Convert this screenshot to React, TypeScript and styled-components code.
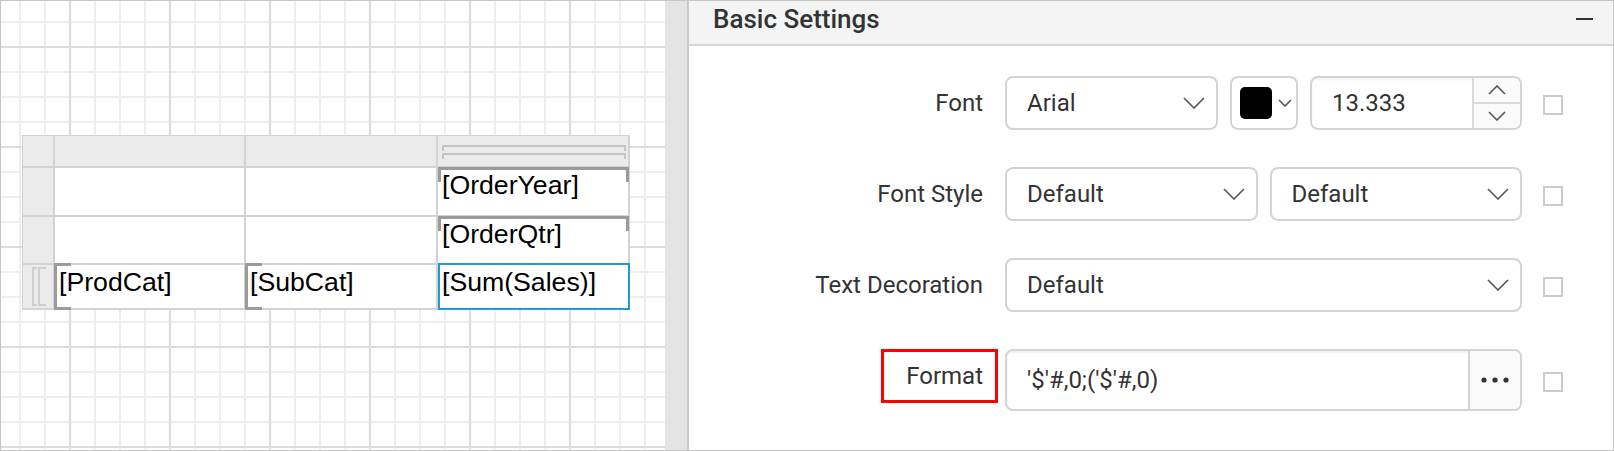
import React from 'react';
import styled, { createGlobalStyle, css } from 'styled-components';

const GlobalStyle = createGlobalStyle`
  * {
    box-sizing: border-box;
  }
  body {
    margin: 0;
    background: #fff;
    font-family: Roboto, 'Liberation Sans', sans-serif;
  }
`;

const Frame = styled.div`
  display: flex;
  width: 1614px;
  height: 451px;
  border: 1px solid #c6c6c6;
  overflow: hidden;
`;

// design surface with the 25px / 100px grid
const Canvas = styled.div`
  flex: 0 0 664px;
  padding: 134px 0 0 21px;
  background-color: #fff;
  background-image:
    linear-gradient(to right, #dcdcdc 2px, transparent 2px),
    linear-gradient(to bottom, #dcdcdc 2px, transparent 2px),
    linear-gradient(to right, #eeeeee 2px, transparent 2px),
    linear-gradient(to bottom, #eeeeee 2px, transparent 2px);
  background-size: 100px 100px, 100px 100px, 25px 25px, 25px 25px;
  background-position: 68px 45px, 68px 45px, 18px 20px, 18px 20px;
`;

const Splitter = styled.div`
  flex: 0 0 24px;
  background: #e4e4e4;
  border-right: 2px solid #c9c9c9;
`;

const Panel = styled.div`
  flex: 1;
  display: flex;
  flex-direction: column;
  background: #fff;
`;

const PanelHeader = styled.div`
  height: 45px;
  display: flex;
  align-items: center;
  justify-content: space-between;
  padding: 0 20px 7px 24px;
  background: #f4f4f4;
  border-bottom: 2px solid #d6d6d6;
`;

const PanelTitle = styled.span`
  font-size: 26px;
  font-weight: 500;
  color: #333;
`;

const Collapse = styled.span`
  width: 17px;
  height: 2px;
  background: #333;
`;

const SettingsGrid = styled.div`
  display: grid;
  grid-template-columns: 1fr 517px 34px;
  column-gap: 7px;
  row-gap: 37px;
  align-items: start;
  padding: 30px 50px 0 0;
`;

const FieldLabel = styled.div<{ $highlight?: boolean }>`
  justify-self: end;
  height: 54px;
  display: flex;
  align-items: center;
  padding: 0 12px 0 22px;
  border: 3px solid ${p => (p.$highlight ? '#ff0000' : 'transparent')};
  font-size: 24px;
  color: #333;
  white-space: nowrap;
`;

const ControlRow = styled.div`
  display: flex;
  gap: 12px;
`;

const Select = styled.div<{ $width?: number }>`
  flex: ${p => (p.$width ? `0 0 ${p.$width}px` : '1 1 0')};
  height: 54px;
  display: flex;
  align-items: center;
  justify-content: space-between;
  padding: 0 11px 0 20px;
  border: 2px solid #d3d3d3;
  border-radius: 8px;
  font-size: 24px;
  color: #333;
`;

const ColorPicker = styled.div`
  flex: 0 0 68px;
  height: 54px;
  display: flex;
  align-items: center;
  gap: 6px;
  padding-left: 8px;
  border: 2px solid #d3d3d3;
  border-radius: 8px;
`;

const Swatch = styled.span<{ $color: string }>`
  width: 32px;
  height: 32px;
  border-radius: 5px;
  background: ${p => p.$color};
`;

const Numeric = styled.div`
  flex: 1;
  height: 54px;
  display: flex;
  border: 2px solid #d3d3d3;
  border-radius: 8px;
  overflow: hidden;
  box-shadow: inset 0 2px 2px rgba(0, 0, 0, 0.05);
`;

const FieldValue = styled.div`
  flex: 1;
  display: flex;
  align-items: center;
  padding-left: 20px;
  font-size: 24px;
  color: #333;
  white-space: nowrap;
`;

const Spinner = styled.div`
  flex: 0 0 48px;
  display: flex;
  flex-direction: column;
  border-left: 2px solid #d8d8d8;
  background: #fafafa;
`;

const SpinButton = styled.div<{ $top?: boolean }>`
  flex: 1;
  display: flex;
  align-items: center;
  justify-content: center;
  ${p => p.$top && css`border-bottom: 2px solid #d8d8d8;`}
`;

const TextBox = styled.div`
  height: 62px;
  display: flex;
  border: 2px solid #d3d3d3;
  border-radius: 8px;
  overflow: hidden;
  box-shadow: inset 0 2px 2px rgba(0, 0, 0, 0.05);
`;

const EllipsisButton = styled.div`
  flex: 0 0 52px;
  display: flex;
  align-items: center;
  justify-content: center;
  border-left: 2px solid #d3d3d3;
  background: #fafafa;
`;

const Check = styled.div`
  justify-self: end;
  align-self: center;
  margin-top: 4px;
  width: 20px;
  height: 20px;
  border: 2px solid #cbcbcb;
  background: #fff;
`;

// report tablix on the design surface
const DesignTable = styled.div`
  display: grid;
  grid-template-columns: 30px 189px 190px 190px;
  grid-template-rows: 30px 47px 46px 43px;
  gap: 2px;
  padding: 1px 2px 2px 1px;
  width: max-content;
  background: #d3d3d3;
`;

const HeadCell = styled.div`
  background: #ebebeb;
`;

const Cell = styled.div<{ $mark?: 'left' | 'top'; $selected?: boolean }>`
  position: relative;
  background: #fff;
  padding: 2px 4px;
  font-family: 'Liberation Sans', Arial, sans-serif;
  font-size: 26.67px;
  color: #000;
  white-space: nowrap;
  ${p => p.$mark === 'left' && css`
    &::before {
      content: '';
      position: absolute;
      top: -2px;
      bottom: -2px;
      left: -1px;
      width: 14px;
      border: 3px solid #9b9b9b;
      border-right: none;
    }
  `}
  ${p => p.$mark === 'top' && css`
    &::before {
      content: '';
      position: absolute;
      top: -1px;
      left: 0;
      right: -1px;
      height: 12px;
      border: 3px solid #9b9b9b;
      border-bottom: none;
    }
  `}
  ${p => p.$selected && css`
    &::after {
      content: '';
      position: absolute;
      inset: -2px -2px -2px 0;
      border: 2px solid #1e9bd7;
    }
  `}
`;

const GroupLines = styled.div`
  display: flex;
  flex-direction: column;
  gap: 2px;
  padding: 9px 2px 0 4px;
`;

const GroupLine = styled.div`
  height: 6px;
  border: 2px solid #c4c4c4;
  border-bottom: none;
`;

const GroupMarks = styled.div`
  display: flex;
  gap: 1px;
  padding: 2px 0 0 9px;
`;

const GroupMark = styled.div<{ $w: number }>`
  width: ${p => p.$w}px;
  height: 39px;
  border: 2px solid #cfcfcf;
  border-right: none;
`;

const Chevron = ({ w, h, up }: { w: number; h: number; up?: boolean }) => (
  <svg width={w} height={h} viewBox={`0 0 ${w} ${h}`}>
    <polyline
      points={up ? `1,${h - 1} ${w / 2},1 ${w - 1},${h - 1}` : `1,1 ${w / 2},${h - 1} ${w - 1},1`}
      fill='none'
      stroke='#555'
      strokeWidth='1.6'
    />
  </svg>
);

const Dots = () => (
  <svg width='28' height='6' viewBox='0 0 28 6'>
    <circle cx='3' cy='3' r='2.6' fill='#333' />
    <circle cx='14' cy='3' r='2.6' fill='#333' />
    <circle cx='25' cy='3' r='2.6' fill='#333' />
  </svg>
);

const App = () => (
  <>
    <GlobalStyle />
    <Frame>
      <Canvas>
        <DesignTable>
          <HeadCell />
          <HeadCell />
          <HeadCell />
          <HeadCell>
            <GroupLines>
              <GroupLine />
              <GroupLine />
            </GroupLines>
          </HeadCell>

          <HeadCell />
          <Cell />
          <Cell />
          <Cell $mark='top'>[OrderYear]</Cell>

          <HeadCell />
          <Cell />
          <Cell />
          <Cell $mark='top'>[OrderQtr]</Cell>

          <HeadCell>
            <GroupMarks>
              <GroupMark $w={5} />
              <GroupMark $w={8} />
            </GroupMarks>
          </HeadCell>
          <Cell $mark='left'>[ProdCat]</Cell>
          <Cell $mark='left'>[SubCat]</Cell>
          <Cell $selected>[Sum(Sales)]</Cell>
        </DesignTable>
      </Canvas>
      <Splitter />
      <Panel>
        <PanelHeader>
          <PanelTitle>Basic Settings</PanelTitle>
          <Collapse />
        </PanelHeader>
        <SettingsGrid>
          <FieldLabel>Font</FieldLabel>
          <ControlRow>
            <Select $width={213}>
              Arial
              <Chevron w={22} h={12} />
            </Select>
            <ColorPicker>
              <Swatch $color='#000' />
              <Chevron w={14} h={8} />
            </ColorPicker>
            <Numeric>
              <FieldValue>13.333</FieldValue>
              <Spinner>
                <SpinButton $top>
                  <Chevron w={18} h={10} up />
                </SpinButton>
                <SpinButton>
                  <Chevron w={18} h={10} />
                </SpinButton>
              </Spinner>
            </Numeric>
          </ControlRow>
          <Check />

          <FieldLabel>Font Style</FieldLabel>
          <ControlRow>
            <Select>
              Default
              <Chevron w={22} h={12} />
            </Select>
            <Select>
              Default
              <Chevron w={22} h={12} />
            </Select>
          </ControlRow>
          <Check />

          <FieldLabel>Text Decoration</FieldLabel>
          <ControlRow>
            <Select>
              Default
              <Chevron w={22} h={12} />
            </Select>
          </ControlRow>
          <Check />

          <FieldLabel $highlight>Format</FieldLabel>
          <TextBox>
            <FieldValue>'$'#,0;('$'#,0)</FieldValue>
            <EllipsisButton>
              <Dots />
            </EllipsisButton>
          </TextBox>
          <Check />
        </SettingsGrid>
      </Panel>
    </Frame>
  </>
);

export default App;
